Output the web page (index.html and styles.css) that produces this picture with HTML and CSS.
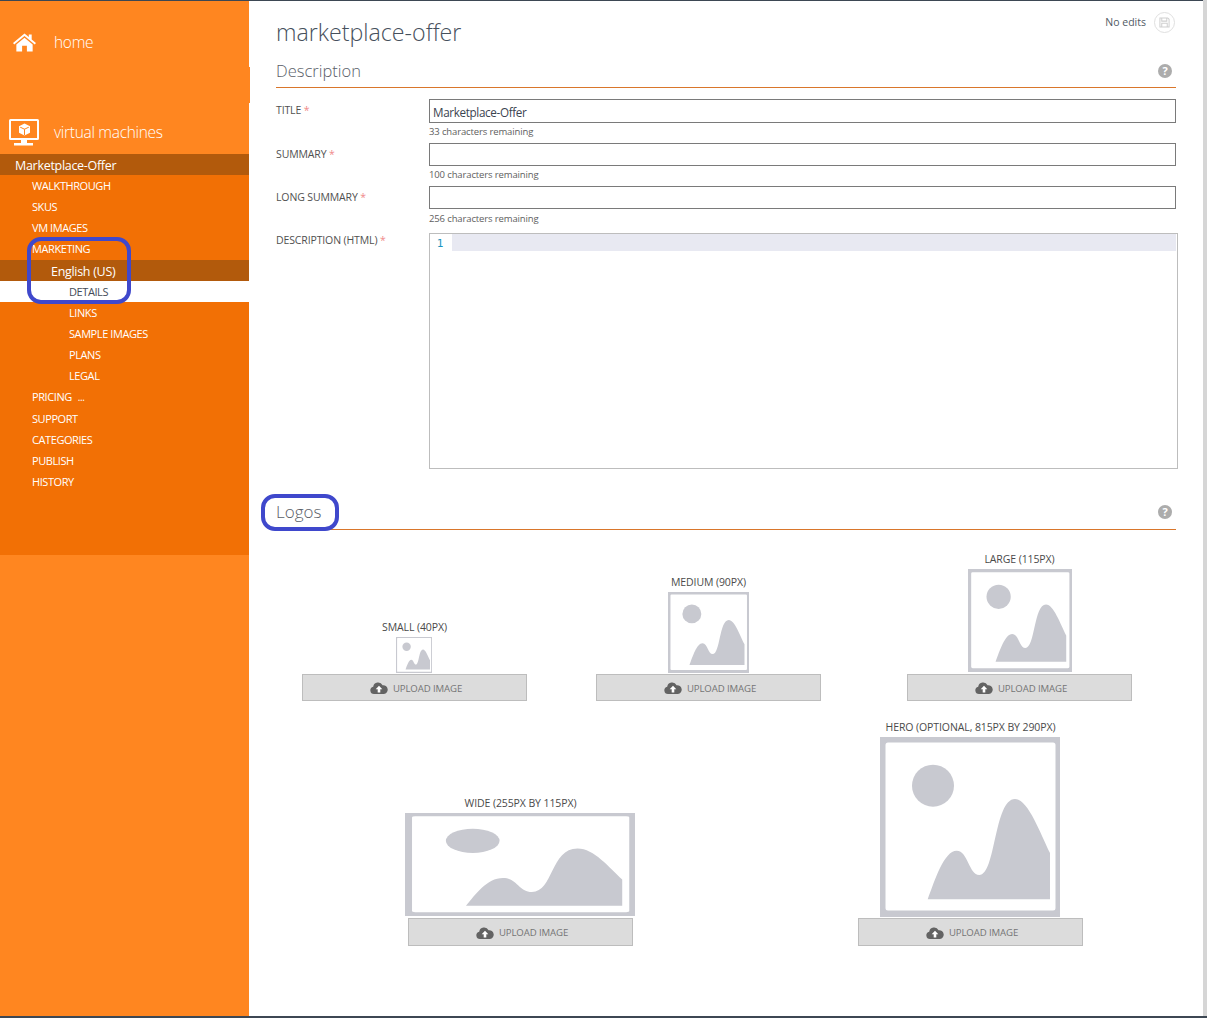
FILE: index.html
```html
<!DOCTYPE html>
<html lang="en">
<head>
<meta charset="utf-8">
<title>marketplace-offer</title>
<link rel="stylesheet" href="styles.css">
</head>
<body>
<svg class="defs" width="0" height="0" aria-hidden="true">
  <symbol id="placeholder" viewBox="0 0 180 180" preserveAspectRatio="none">
    <path fill="#c8c9d0" fill-rule="evenodd" d="M0 0H180V180H0ZM8 5.500Q5.500 5.500 5.500 8V171Q5.500 173.500 8 173.500H173Q175.500 173.500 175.500 171V8Q175.500 5.500 173 5.500Z"/>
    <circle cx="53" cy="48.700" r="21" fill="#c8c9d0"/>
    <path fill="#c8c9d0" d="M47.700 162.300C55 143 64 113.700 76.700 113.700C88 113.700 89 138 99.300 138C116 138 114 62 135 62C148 62 160 96 170 116V162.300Z"/>
  </symbol>
  <symbol id="cloud" viewBox="0 0 18 12">
    <path fill="#636363" d="M4 12A3.700 3.700 0 0 1 3.200 4.700A5 5 0 0 1 12.600 3.300A4.400 4.400 0 0 1 14 12Z"/>
    <path fill="#fff" d="M9 3.800 12.300 7.200H10.300V10.400H7.700V7.200H5.700Z"/>
  </symbol>
</svg>

<div class="shell">
  <div class="window">
    <aside class="sidebar">
      <span class="notch"></span>
      <a class="top-link top-home">
        <svg class="home-icon" viewBox="0 0 24 19" aria-hidden="true"><path fill="#fff" d="M12 0 16.500 3.800V1.200H19.500V6.300L24 10.100 22.700 11.600 12 2.700 1.300 11.600 0 10.100ZM12 4.500 20.500 11.600V19H14.500V13H9.500V19H3.500V11.600Z"/></svg>
        <span>home</span>
      </a>
      <a class="top-link top-vm">
        <svg class="vm-icon" viewBox="0 0 30 27" aria-hidden="true">
          <path fill="#fff" fill-rule="evenodd" d="M1.500 0H28.500Q30 0 30 1.500V19.500Q30 21 28.500 21H18V24H24V26.500H5V24H12V21H1.500Q0 21 0 19.500V1.500Q0 0 1.500 0ZM2 2V19H28V2Z"/>
          <path fill="#fff" d="M15.500 4.500 21 7.300V13.700L15.500 16.500 10 13.700V7.300Z"/>
          <path fill="#ff8620" d="M15.500 9.800 15.500 10.800 11 8.500 11.500 7.700ZM15.500 9.800 19.500 7.700 20 8.500 15.500 10.800ZM15 10.500H16V16H15Z"/>
        </svg>
        <span>virtual machines</span>
      </a>
      <nav class="offer-nav">
        <div class="offer-title">Marketplace-Offer</div>
        <ul class="nav-list">
          <li class="nav-item">WALKTHROUGH</li>
          <li class="nav-item">SKUS</li>
          <li class="nav-item">VM IMAGES</li>
          <li class="nav-item nav-tall">MARKETING</li>
          <li class="nav-lang">English (US)</li>
          <li class="nav-item nav-sub nav-current">DETAILS</li>
          <li class="nav-item nav-sub">LINKS</li>
          <li class="nav-item nav-sub">SAMPLE IMAGES</li>
          <li class="nav-item nav-sub">PLANS</li>
          <li class="nav-item nav-sub">LEGAL</li>
          <li class="nav-item nav-tall">PRICING<span class="dots">...</span></li>
          <li class="nav-item">SUPPORT</li>
          <li class="nav-item">CATEGORIES</li>
          <li class="nav-item">PUBLISH</li>
          <li class="nav-item">HISTORY</li>
        </ul>
      </nav>
      <span class="mark mark-nav"></span>
    </aside>

    <main class="content">
      <span class="mark mark-logos"></span>
      <header class="page-header">
        <h1 class="page-title">marketplace-offer</h1>
        <div class="save-state">
          <span class="save-text">No edits</span>
          <span class="save-button">
            <svg viewBox="0 0 12 12" aria-hidden="true"><path fill="none" stroke="#cfcfcf" stroke-width="1.100" d="M1 1H9.500L11 2.500V11H1ZM3 1V4.500H8.500V1M3 11V6.800H9V11"/></svg>
          </span>
        </div>
      </header>

      <section>
        <div class="section-head">
          <h2 class="section-title">Description</h2>
          <span class="help-icon">?</span>
        </div>
        <form class="form">
          <label class="field-label">TITLE <em>*</em></label>
          <div class="field">
            <input class="text-input input-tall" type="text" value="Marketplace-Offer">
            <div class="hint">33 characters remaining</div>
          </div>
          <label class="field-label">SUMMARY <em>*</em></label>
          <div class="field">
            <input class="text-input" type="text">
            <div class="hint">100 characters remaining</div>
          </div>
          <label class="field-label">LONG SUMMARY <em>*</em></label>
          <div class="field field-last">
            <input class="text-input" type="text">
            <div class="hint">256 characters remaining</div>
          </div>
          <label class="field-label field-label-editor">DESCRIPTION (HTML) <em>*</em></label>
          <div class="editor">
            <span class="line-number">1</span>
            <span class="active-line"></span>
          </div>
        </form>
      </section>

      <section class="logos">
        <div class="section-head">
          <h2 class="section-title section-logos">Logos</h2>
          <span class="help-icon">?</span>
        </div>
        <div class="logo-row logo-row-first">
          <div class="logo">
            <div class="logo-label">SMALL (40PX)</div>
            <svg class="logo-image size-small"><use href="#placeholder"/></svg>
            <button class="upload" type="button"><svg class="cloud"><use href="#cloud"/></svg>UPLOAD IMAGE</button>
          </div>
          <div class="logo logo-medium">
            <div class="logo-label">MEDIUM (90PX)</div>
            <svg class="logo-image size-medium"><use href="#placeholder"/></svg>
            <button class="upload" type="button"><svg class="cloud"><use href="#cloud"/></svg>UPLOAD IMAGE</button>
          </div>
          <div class="logo logo-large">
            <div class="logo-label">LARGE (115PX)</div>
            <svg class="logo-image size-large"><use href="#placeholder"/></svg>
            <button class="upload" type="button"><svg class="cloud"><use href="#cloud"/></svg>UPLOAD IMAGE</button>
          </div>
        </div>
        <div class="logo-row logo-row-second">
          <div class="logo">
            <div class="logo-label">WIDE (255PX BY 115PX)</div>
            <svg class="logo-image size-wide"><use href="#placeholder"/></svg>
            <button class="upload upload-tall" type="button"><svg class="cloud"><use href="#cloud"/></svg>UPLOAD IMAGE</button>
          </div>
          <div class="logo">
            <div class="logo-label">HERO (OPTIONAL, 815PX BY 290PX)</div>
            <svg class="logo-image size-hero"><use href="#placeholder"/></svg>
            <button class="upload upload-tall" type="button"><svg class="cloud"><use href="#cloud"/></svg>UPLOAD IMAGE</button>
          </div>
        </div>
      </section>
    </main>
  </div>
  <div class="scroll-strip"></div>
</div>
<div class="bottom-bar"></div>
</body>
</html>
```

FILE: styles.css
```css
* { box-sizing: border-box; }

html, body {
  margin: 0;
  height: 1018px;
  overflow: hidden;
}

body {
  display: flex;
  flex-direction: column;
  background: #fff;
  color: #444;
  font-family: "Open Sans", "Liberation Sans", sans-serif;
}

.defs { position: absolute; }

.shell {
  flex: 1;
  display: flex;
  min-height: 0;
}

.window {
  flex: 1;
  display: flex;
  border-top: 1px solid #3d4753;
  min-width: 0;
}

.scroll-strip {
  width: 4px;
  background: #d6d6d6;
}

.bottom-bar {
  height: 2px;
  background: #3d4753;
}

/* Sidebar */
.sidebar {
  position: relative;
  width: 249px;
  flex: none;
  background: #ff8620;
  color: #fff;
}

.notch {
  position: absolute;
  left: 249px;
  top: 66px;
  width: 1px;
  height: 36px;
  background: #ff8620;
}

.top-link {
  display: flex;
  align-items: center;
  font-size: 15.500px;
  font-weight: 300;
  letter-spacing: -0.300px;
}

.top-home {
  height: 81px;
  margin-bottom: 28px;
  padding-left: 13px;
  gap: 18px;
}

.top-vm {
  height: 44px;
  padding-left: 9px;
  gap: 15px;
}

.home-icon { width: 23px; height: 19px; margin-top: 1px; }
.vm-icon { width: 30px; height: 27px; }

.offer-nav {
  background: #f27005;
  height: 401px;
}

.offer-title {
  height: 21px;
  line-height: 23px;
  padding-left: 15px;
  background: #b25a0c;
  font-size: 12.500px;
  letter-spacing: -0.300px;
}

.nav-list {
  list-style: none;
  margin: 0;
  padding: 0;
}

.nav-item {
  height: 21px;
  line-height: 21px;
  padding-left: 32px;
  font-size: 11px;
  letter-spacing: -0.420px;
}

.nav-tall { height: 22px; }

.nav-sub { padding-left: 69px; }

.nav-lang {
  height: 21px;
  line-height: 23px;
  padding-left: 51px;
  background: #b25a0c;
  font-size: 12.500px;
  letter-spacing: -0.300px;
}

.nav-current {
  background: #fff;
  color: #444c58;
}

.dots {
  margin-left: 6px;
  font-size: 10px;
}

/* Annotations */
.mark {
  position: absolute;
  border: 4px solid #3f48cc;
  border-radius: 14px;
  pointer-events: none;
}

.mark-nav {
  left: 27px;
  top: 236px;
  width: 104px;
  height: 67px;
}

.mark-logos {
  left: 12px;
  top: 493px;
  width: 78px;
  height: 37px;
}

/* Content */
.content {
  position: relative;
  flex: 1;
  min-width: 0;
  padding: 0 27px;
}

.page-header {
  display: flex;
  justify-content: space-between;
  height: 47px;
}

.page-title {
  margin: 15px 0 0;
  font-size: 23.200px;
  font-weight: 300;
  line-height: 32px;
  color: #46505c;
}

.save-state {
  display: flex;
  align-items: center;
  gap: 8px;
  height: 21px;
  margin: 11px 1px 0 0;
  font-size: 10.500px;
  color: #505a64;
}

.save-text { margin-bottom: 2px; }

.save-button {
  display: flex;
  align-items: center;
  justify-content: center;
  width: 21px;
  height: 21px;
  border: 1px solid #e0e0e0;
  border-radius: 50%;
}

.save-button svg { width: 11px; height: 11px; }

.section-head {
  display: flex;
  justify-content: space-between;
  align-items: center;
  height: 40px;
  border-bottom: 1px solid #d9762b;
}

.section-title {
  margin: 0;
  font-size: 16.500px;
  font-weight: 300;
  color: #5a6068;
  line-height: 46px;
  height: 40px;
}

.section-logos {
  font-size: 17px;
  line-height: 44px;
}

.help-icon {
  width: 14px;
  height: 14px;
  margin: 7px 4px 0 0;
  border-radius: 50%;
  background: #acacac;
  color: #fff;
  font-size: 11px;
  font-weight: 700;
  line-height: 14px;
  text-align: center;
}

.section-logos + .help-icon { margin-top: 5px; }

.form {
  display: grid;
  grid-template-columns: 153px 1fr;
  align-items: start;
  margin-top: 11px;
}

.field-label {
  font-size: 10.500px;
  line-height: 16px;
  color: #505050;
  margin-top: 3px;
  letter-spacing: -0.130px;
}

.field-label-editor { margin-top: -1px; }

.field-label em {
  color: #f08a8a;
  font-style: normal;
}

.text-input {
  display: block;
  width: 100%;
  height: 23px;
  padding: 1px 3px 0;
  border: 1px solid #7a7a7a;
  background: #fff;
  font: 11.700px "Open Sans", "Liberation Sans", sans-serif;
  letter-spacing: -0.350px;
  color: #3b4450;
  outline: none;
}

.input-tall { height: 24px; }

.hint {
  height: 20px;
  line-height: 18px;
  font-size: 9.500px;
  letter-spacing: -0.130px;
  color: #5e5e5e;
}

.field-last .hint { height: 24px; line-height: 20px; }

.editor {
  position: relative;
  display: flex;
  align-items: flex-start;
  height: 236px;
  margin-right: -2px;
  border: 1px solid #bdbdbd;
}

.line-number {
  width: 22px;
  height: 17px;
  padding: 1px 2px 0 0;
  font: 11px/18px "DejaVu Sans Mono", monospace;
  color: #1b95c0;
  text-align: center;
}

.active-line {
  flex: 1;
  height: 17px;
  margin-right: 1px;
  background: #e8e9f2;
}

.logos { margin-top: 21px; }

.logo-row {
  display: flex;
  align-items: flex-end;
}

.logo-row-first {
  padding: 21px 0 0 26px;
}

.logo-row-second {
  margin-top: 18px;
  padding-left: 132px;
  column-gap: 225px;
}

.logo-medium { margin-left: 69px; }
.logo-large { margin-left: 86px; }

.logo {
  display: flex;
  flex-direction: column;
  align-items: center;
  width: 225px;
}

.logo-label {
  height: 16px;
  margin-bottom: 2px;
  line-height: 16px;
  white-space: nowrap;
  font-size: 10.500px;
  letter-spacing: -0.100px;
  color: #4a4a4a;
}

.logo-image {
  display: block;
  flex: none;
  margin-bottom: 1px;
}

.size-small { width: 36px; height: 36px; margin-right: 1px; }
.size-medium { width: 81px; height: 81px; }
.size-large { width: 104px; height: 103px; margin-bottom: 2px; }
.size-wide { width: 230px; height: 103px; margin: 0 1px 2px 0; }
.size-hero { width: 180px; height: 180px; margin-right: 1px; }

.upload {
  display: flex;
  align-items: center;
  justify-content: center;
  gap: 5px;
  width: 225px;
  height: 27px;
  padding: 1px 2px 0 5px;
  border: 1px solid #bdbdbd;
  background: #dcdcdc;
  font: 9.600px "Open Sans", "Liberation Sans", sans-serif;
  color: #757575;
  letter-spacing: -0.100px;
}

.upload-tall { height: 28px; }

.cloud { width: 18px; height: 12px; flex: none; }
```
